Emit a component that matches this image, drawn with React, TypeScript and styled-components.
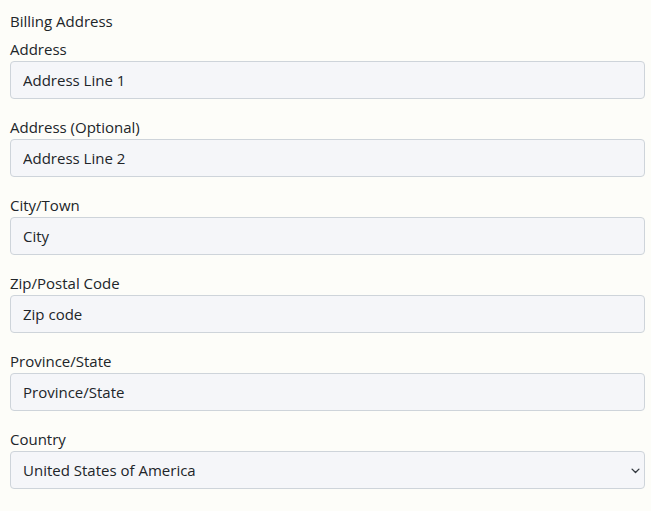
import React from "react";
import styled, { createGlobalStyle } from "styled-components";

const Global = createGlobalStyle`
  html, body { margin: 0; padding: 0; background: #fdfdf9; }
  body { font-family: "Open Sans", "Noto Sans", sans-serif; color: #212529; }
  * { box-sizing: border-box; }
`;

const Form = styled.form`
  display: flex;
  flex-direction: column;
  padding: 9px 6px 0 10px;
`;

const Legend = styled.div`
  font-size: 15px;
  line-height: 24px;
  margin-bottom: 4px;
`;

const Field = styled.div`
  display: flex;
  flex-direction: column;
  margin-bottom: 16px;
`;

const Label = styled.label`
  font-size: 15px;
  line-height: 24px;
`;

const controlStyles = `
  height: 38px;
  width: 100%;
  padding: 6px 12px;
  font-family: inherit;
  font-size: 15px;
  line-height: 24px;
  color: #212529;
  background-color: #f5f6f9;
  border: 1px solid #ced4da;
  border-radius: 4px;
  outline: none;
`;

const Input = styled.input`
  ${controlStyles}
  &::placeholder { color: #212529; opacity: 1; }
`;

const Select = styled.select`
  ${controlStyles}
  appearance: none;
  padding-right: 36px;
  background-image: url("data:image/svg+xml,%3csvg xmlns='http://www.w3.org/2000/svg' viewBox='0 0 16 16'%3e%3cpath fill='none' stroke='%23343a40' stroke-linecap='round' stroke-linejoin='round' stroke-width='2' d='M3 6l5 5 5-5'/%3e%3c/svg%3e");
  background-repeat: no-repeat;
  background-position: right 3px center;
  background-size: 11px 11px;
`;

const fields = [
  { label: "Address", placeholder: "Address Line 1" },
  { label: "Address (Optional)", placeholder: "Address Line 2" },
  { label: "City/Town", placeholder: "City" },
  { label: "Zip/Postal Code", placeholder: "Zip code" },
  { label: "Province/State", placeholder: "Province/State" },
];

export default function App() {
  return (
    <>
      <Global />
      <Form>
        <Legend>Billing Address</Legend>
        {fields.map((f) => (
          <Field key={f.label}>
            <Label>{f.label}</Label>
            <Input placeholder={f.placeholder} />
          </Field>
        ))}
        <Field>
          <Label>Country</Label>
          <Select defaultValue="US">
            <option value="US">United States of America</option>
            <option value="CA">Canada</option>
          </Select>
        </Field>
      </Form>
    </>
  );
}
